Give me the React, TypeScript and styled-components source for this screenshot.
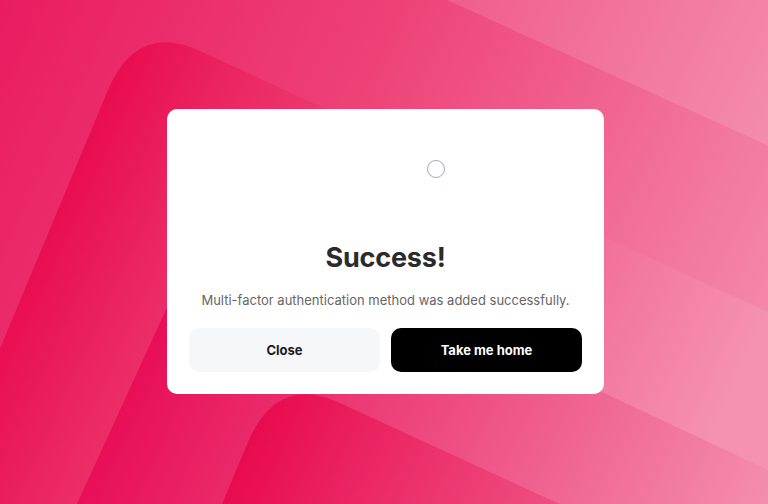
import React, { FC, ReactElement } from 'react';
import styled, { createGlobalStyle } from 'styled-components';

const GlobalStyle = createGlobalStyle`
  html, body {
    margin: 0;
    padding: 0;
  }
  body {
    font-family: Inter, "Noto Sans", "Liberation Sans", sans-serif;
    -webkit-font-smoothing: antialiased;
  }
  * {
    box-sizing: border-box;
  }
`;

// chevron outline, reused for both wedges (second one is shifted down)
const wedge = 'M108 90 Q137 22 200 51 L800 327 L800 600 L-105 600 Z';

const Backdrop: FC = (): ReactElement => (
  <BackdropSvg viewBox="0 0 768 504" preserveAspectRatio="none">
    <defs>
      <linearGradient id="bgBase" gradientUnits="userSpaceOnUse" x1="-100" y1="-50" x2="768" y2="350">
        <stop offset="0" stopColor="#e8105a" />
        <stop offset="0.5" stopColor="#ee4277" />
        <stop offset="1" stopColor="#f48aab" />
      </linearGradient>
      <linearGradient id="bgArmA" gradientUnits="userSpaceOnUse" x1="100" y1="40" x2="760" y2="344">
        <stop offset="0" stopColor="#e8064c" />
        <stop offset="0.2" stopColor="#eb2864" />
        <stop offset="1" stopColor="#f592b2" />
      </linearGradient>
      <linearGradient id="bgInner" gradientUnits="userSpaceOnUse" x1="150" y1="300" x2="800" y2="600">
        <stop offset="0" stopColor="#e80b55" />
        <stop offset="1" stopColor="#f59cb8" />
      </linearGradient>
      {/* in the wedge's own (untransformed) coordinates */}
      <linearGradient id="bgArmB" gradientUnits="userSpaceOnUse" x1="110" y1="40" x2="560" y2="248">
        <stop offset="0" stopColor="#e8064c" />
        <stop offset="0.2" stopColor="#ea1d5d" />
        <stop offset="0.7" stopColor="#ef5584" />
        <stop offset="1" stopColor="#f27399" />
      </linearGradient>
    </defs>
    <rect x="0" y="0" width="768" height="504" fill="url(#bgBase)" />
    <path d="M447 0 L800 0 L800 160 Z" fill="#ffffff" fillOpacity="0.12" />
    <path d={wedge} fill="url(#bgArmA)" />
    <path d="M33 600 L212 209 L800 485 L800 600 Z" fill="url(#bgInner)" />
    <path d={wedge} transform="translate(140 352)" fill="url(#bgArmB)" />
  </BackdropSvg>
);

export default function App(): ReactElement {
  return (
    <>
      <GlobalStyle />
      <Page>
        <Backdrop />
        <Dialog>
          <AnimationBox>
            <Ring />
          </AnimationBox>
          <Title>Success!</Title>
          <Message>Multi-factor authentication method was added successfully.</Message>
          <ButtonRow>
            <ActionButton>Close</ActionButton>
            <ActionButton primary>Take me home</ActionButton>
          </ButtonRow>
        </Dialog>
      </Page>
    </>
  );
}

const Page = styled.div`
  position: relative;
  width: 100%;
  height: 100vh;
  overflow: hidden;
  display: flex;
  align-items: center;
  justify-content: center;
  padding-bottom: 2px;
`;

const BackdropSvg = styled.svg`
  position: absolute;
  inset: 0;
  width: 100%;
  height: 100%;
  display: block;
`;

const Dialog = styled.div`
  position: relative;
  width: 437px;
  margin-left: 3px;
  padding: 22px;
  background: #ffffff;
  border-radius: 10px;
  display: flex;
  flex-direction: column;
  align-items: center;
`;

const AnimationBox = styled.div`
  width: 100%;
  height: 110px;
  display: flex;
  align-items: flex-start;
  padding: 29px 0 0 238px;
`;

const Ring = styled.div`
  width: 18px;
  height: 18px;
  border-radius: 50%;
  border: 1px solid #a9a5c9;
`;

const Title = styled.h1`
  margin: 0;
  font-size: 27px;
  line-height: 34px;
  font-weight: 700;
  color: #2b2b2b;
  letter-spacing: -0.2px;
`;

const Message = styled.p`
  margin: 15px 0 0;
  font-size: 13px;
  line-height: 20px;
  color: #666666;
  text-align: center;
  white-space: nowrap;
`;

const ButtonRow = styled.div`
  width: 100%;
  margin-top: 18px;
  display: grid;
  grid-template-columns: 1fr 1fr;
  gap: 11px;
`;

const ActionButton = styled.button<{ primary?: boolean }>`
  height: 44px;
  border: none;
  border-radius: 10px;
  font-family: Inter, "Noto Sans", "Liberation Sans", sans-serif;
  font-size: 13px;
  font-weight: 700;
  cursor: pointer;
  background: ${(p) => (p.primary ? '#000000' : '#f6f7f9')};
  color: ${(p) => (p.primary ? '#ffffff' : '#1c1c1c')};
`;
